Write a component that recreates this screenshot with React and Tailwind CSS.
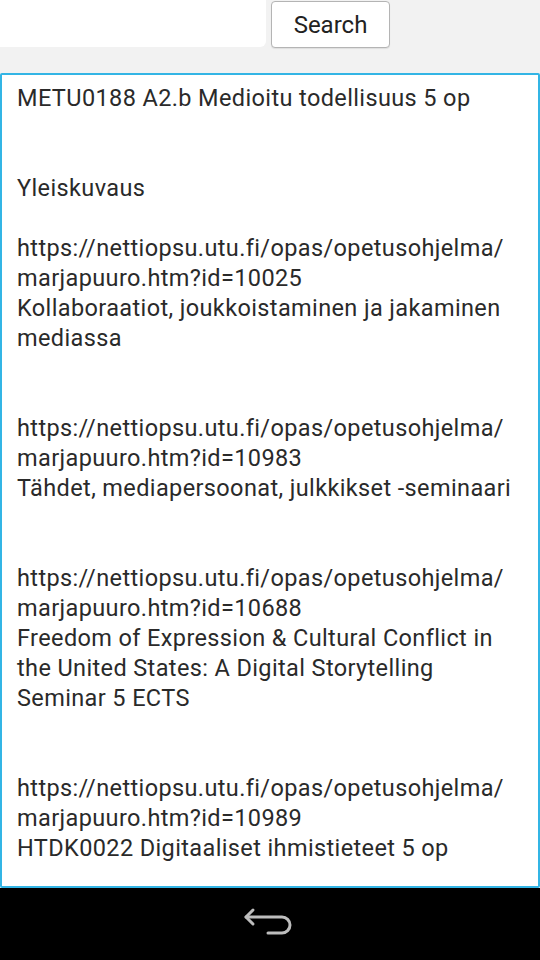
import React from 'react';

const lines = [
  'METU0188 A2.b Medioitu todellisuus 5 op',
  '',
  '',
  'Yleiskuvaus',
  '',
  'https://nettiopsu.utu.fi/opas/opetusohjelma/',
  'marjapuuro.htm?id=10025',
  'Kollaboraatiot, joukkoistaminen ja jakaminen',
  'mediassa',
  '',
  '',
  'https://nettiopsu.utu.fi/opas/opetusohjelma/',
  'marjapuuro.htm?id=10983',
  'Tähdet, mediapersoonat, julkkikset -seminaari',
  '',
  '',
  'https://nettiopsu.utu.fi/opas/opetusohjelma/',
  'marjapuuro.htm?id=10688',
  'Freedom of Expression & Cultural Conflict in',
  'the United States: A Digital Storytelling',
  'Seminar 5 ECTS',
  '',
  '',
  'https://nettiopsu.utu.fi/opas/opetusohjelma/',
  'marjapuuro.htm?id=10989',
  'HTDK0022 Digitaaliset ihmistieteet 5 op',
];

const App = () => {
  return (
    <div className="w-[540px] h-[960px] flex flex-col bg-[#f2f2f2] overflow-hidden" style={{ fontFamily: 'Roboto, "Noto Sans", sans-serif' }}>
      {/* search row */}
      <div className="flex items-start h-[73px]">
        <div className="w-[266px] h-[47px] bg-white rounded-br-[6px]" />
        <button className="ml-[5px] mt-px w-[119px] h-[47px] bg-white border border-[#b4b4b4] rounded-[4px] text-[24px] text-[#222] shadow-[0_1px_1px_rgba(0,0,0,0.08)]">
          Search
        </button>
      </div>

      {/* text area */}
      <div className="h-[815px] bg-white border-2 border-[#33b5e5] rounded-[2px] pl-[15px] pt-[8px] text-[23.5px] tracking-[0.38px] text-[#2a2a2a] leading-[30px]">
        {lines.map((l, i) => (
          <div key={i} className="h-[30px] whitespace-nowrap">{l}</div>
        ))}
      </div>

      {/* nav bar */}
      <div className="flex-1 bg-black flex items-center justify-center">
        <svg width="56" height="34" viewBox="0 0 56 34" fill="none" stroke="#bdbdbd" strokeWidth="3" strokeLinecap="round" strokeLinejoin="round">
          <path d="M4 10 H40 A8 8 0 0 1 40 26 H26" />
          <path d="M11 3 L4 10 L11 17" />
        </svg>
      </div>
    </div>
  );
};

export default App;
